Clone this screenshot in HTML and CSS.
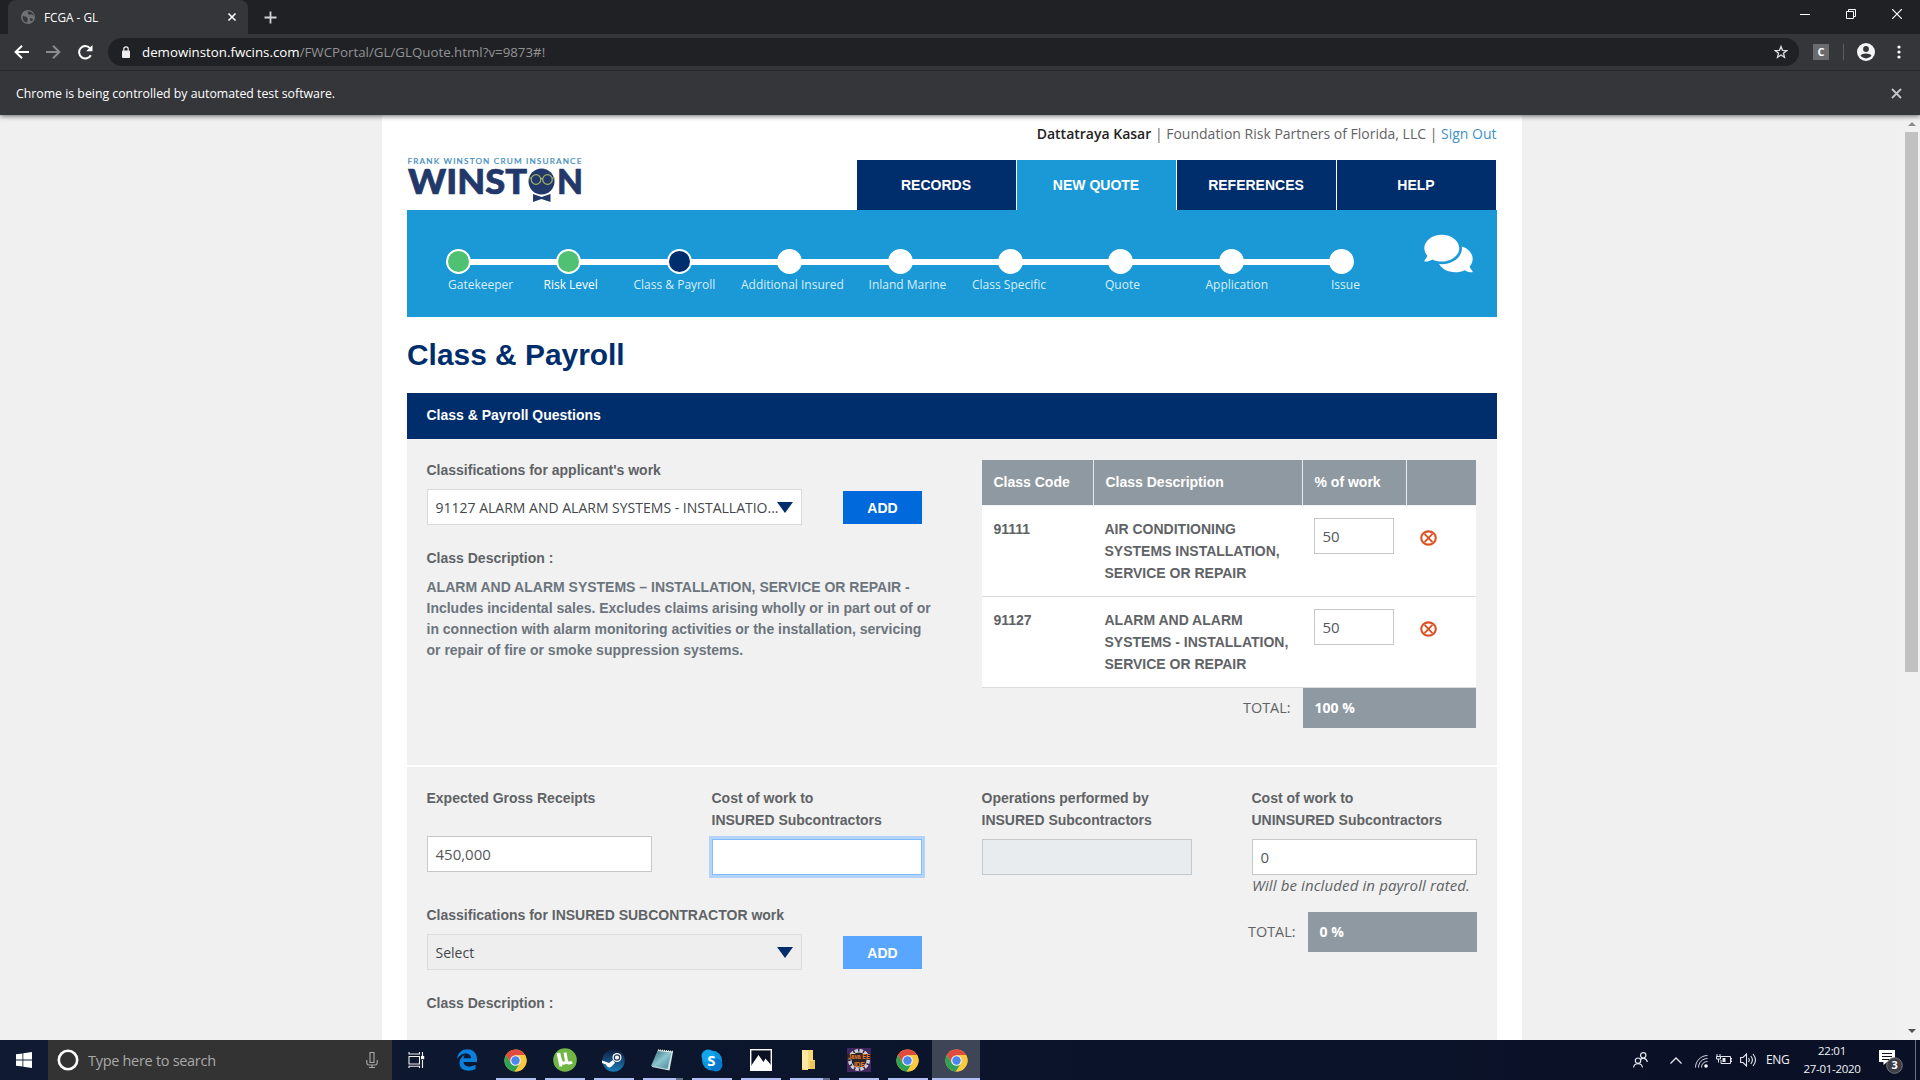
FILE: index.html
```html
<!DOCTYPE html>
<html lang="en">
<head>
<meta charset="utf-8">
<title>FCGA - GL</title>
<link rel="stylesheet" href="styles.css">
</head>
<body>
<svg class="defs" width="0" height="0" aria-hidden="true">
  <symbol id="chrome" viewBox="0 0 24 24">
    <circle cx="12" cy="12" r="11.5" fill="#fbc93d"/>
    <path d="M2 6.3A11.5 11.5 0 0 1 22 6.3L12 6.6 7.2 15z" fill="#e04a3f"/>
    <path d="M2 6.3A11.5 11.5 0 0 0 11.4 23.5L16.8 14.8 12 17 7.2 14.8z" fill="#2fa353"/>
    <path d="M22 6.3A11.5 11.5 0 0 1 11.4 23.5L16.8 14.8 17 10 12 6.4z" fill="#fbc93d"/>
    <circle cx="12" cy="12" r="5.6" fill="#f3f3f3"/>
    <circle cx="12" cy="12" r="4.4" fill="#4a86ee"/>
  </symbol>
  <symbol id="remove" viewBox="0 0 17 16">
    <ellipse cx="8.5" cy="8" rx="7.3" ry="6.6" fill="none" stroke="#db5325" stroke-width="2.1"/>
    <path d="M4.6 3.8L12.4 12.2M12.4 3.8L4.6 12.2" stroke="#db5325" stroke-width="1.9"/>
  </symbol>
</svg>

<header class="browser">
  <div class="tabstrip">
    <div class="tab">
      <svg class="globe" width="14" height="14" viewBox="0 0 14 14"><circle cx="7" cy="7" r="7" fill="#6f7175"/><path d="M2 5.500C3.500 7 5.500 6 6.500 8S5.500 11 6.500 12.500C3 12.500 1 9.500 2 5.500zM7 1.500C6 4 8 5 9.500 4.500S12 5 12.800 6.500C13 3.500 10 1 7 1.500zM9 8.500C11 8 12.500 9 11.500 10.500S8.500 10.500 9 8.500z" fill="#36373a"/></svg>
      <span class="tab-title">FCGA - GL</span>
      <svg width="10" height="10" viewBox="0 0 10 10"><path d="M1.500 1.500L8.500 8.500M8.500 1.500L1.500 8.500" stroke="#fff" stroke-width="1.600"/></svg>
    </div>
    <svg class="newtab" width="13" height="13" viewBox="0 0 13 13"><path d="M6.500 .5V12.500M.5 6.500H12.500" stroke="#d2d3d5" stroke-width="1.800"/></svg>
    <div class="winctl">
      <svg width="10" height="10" viewBox="0 0 10 10"><path d="M0 5.500H10" stroke="#fff"/></svg>
      <svg width="10" height="10" viewBox="0 0 10 10"><path d="M.5 2.500H7.500V9.500H.5zM2.500 2.500V.5H9.500V7.500H7.500" fill="none" stroke="#fff"/></svg>
      <svg width="10" height="10" viewBox="0 0 10 10"><path d="M0 0L10 10M10 0L0 10" stroke="#fff" stroke-width="1.200"/></svg>
    </div>
  </div>
  <div class="toolbar">
    <svg width="15" height="14" viewBox="0 0 15 14"><path d="M15 7H2M8 .8L1.600 7L8 13.200" fill="none" stroke="#fff" stroke-width="2"/></svg>
    <svg width="15" height="14" viewBox="0 0 15 14"><path d="M0 7H13M7 .8L13.400 7L7 13.200" fill="none" stroke="#8b8c8f" stroke-width="1.900"/></svg>
    <svg width="15" height="15" viewBox="0 0 15 15"><path d="M12.800 10.200A6.200 6.200 0 1 1 12 3.200" fill="none" stroke="#fff" stroke-width="2"/><path d="M14.500 0V6.300H8.200z" fill="#fff"/></svg>
    <div class="omnibox">
      <svg width="8" height="12" viewBox="0 0 8 12"><rect y="4.500" width="8" height="7.500" rx="1" fill="#eee"/><path d="M1.800 5V3a2.200 2.200 0 0 1 4.400 0V5" fill="none" stroke="#eee" stroke-width="1.200"/></svg>
      <span class="url"><b>demowinston.fwcins.com</b>/FWCPortal/GL/GLQuote.html?v=9873#!</span>
      <svg class="star" width="14" height="14" viewBox="0 0 14 14"><path d="M7 1.500L8.500 5.300 12.700 5.600 9.500 8.200 10.500 12.300 7 10 3.500 12.300 4.500 8.200 1.300 5.600 5.500 5.300z" fill="none" stroke="#dcdcde" stroke-width="1.300"/></svg>
    </div>
    <span class="ext">C</span>
    <span class="sep"></span>
    <svg class="avatar" width="18" height="18" viewBox="0 0 18 18"><circle cx="9" cy="9" r="9" fill="#f5f5f6"/><circle cx="9" cy="6" r="2.900" fill="#35363a"/><path d="M3.500 12.600C5 9.700 13 9.700 14.500 12.600 12 16.300 6 16.300 3.500 12.600z" fill="#35363a"/></svg>
    <svg width="4" height="14" viewBox="0 0 4 14"><g fill="#fff"><circle cx="2" cy="2" r="1.600"/><circle cx="2" cy="7" r="1.600"/><circle cx="2" cy="12" r="1.600"/></g></svg>
  </div>
  <div class="infobar">
    <span>Chrome is being controlled by automated test software.</span>
    <svg width="11" height="11" viewBox="0 0 11 11"><path d="M1 1L10 10M10 1L1 10" stroke="#c4c5c7" stroke-width="1.800"/></svg>
  </div>
</header>

<div class="viewport">
  <main class="page">
    <div class="userline"><b>Dattatraya Kasar</b> | Foundation Risk Partners of Florida, LLC | <a>Sign Out</a></div>
    <div class="masthead">
      <svg class="logo" width="176" height="50" viewBox="0 0 176 50">
        <text class="logo-top" x="0.500" y="10.700" textLength="174" lengthAdjust="spacing">FRANK WINSTON CRUM INSURANCE</text>
        <text class="logo-main" x="1" y="41" textLength="119" lengthAdjust="spacingAndGlyphs">WINST</text>
        <text class="logo-main" x="150" y="41" textLength="26" lengthAdjust="spacingAndGlyphs">N</text>
        <circle cx="134.500" cy="28.500" r="13" fill="#22386a"/>
        <g fill="none" stroke="#9fb565" stroke-width="1.200"><circle cx="129" cy="26.500" r="4.800"/><circle cx="140.500" cy="26.500" r="4.800"/><path d="M133.800 26Q134.800 25 135.800 26M121.500 25H124.200M145.300 25H148"/></g>
        <path d="M126 41L134.500 44 143.500 41V49L134.500 46 126 49z" fill="#22386a"/>
      </svg>
      <nav class="mainnav"><a>RECORDS</a><a class="on">NEW QUOTE</a><a>REFERENCES</a><a>HELP</a></nav>
    </div>
    <section class="wizard">
      <div class="track">
        <i class="done"></i><i class="done"></i><i class="current"></i><i></i><i></i><i></i><i></i><i></i><i></i>
      </div>
      <svg class="chat" width="49" height="43" viewBox="0 0 576 512"><path fill="#fff" d="M416 192c0-88.400-93.100-160-208-160S0 103.600 0 192c0 34.300 14.100 65.900 38 92-13.400 30.200-35.500 54.200-35.800 54.500-2.200 2.300-2.800 5.700-1.500 8.700S4.800 352 8 352c36.600 0 66.900-12.300 88.700-25 32.200 15.700 70.300 25 111.300 25 114.900 0 208-71.600 208-160zm122 220c23.900-26 38-57.700 38-92 0-66.900-53.500-124.200-129.300-148.100.9 6.600 1.300 13.300 1.300 20.100 0 105.900-107.700 192-240 192-10.800 0-21.300-.8-31.700-1.900C207.800 439.600 281.800 480 368 480c41 0 79.100-9.200 111.300-25 21.800 12.700 52.100 25 88.700 25 3.200 0 6.100-1.900 7.300-4.800 1.300-2.900.7-6.300-1.500-8.700-.3-.3-22.400-24.200-35.800-54.500z"/></svg>
      <div class="steps">
        <span>Gatekeeper</span><span class="hot">Risk Level</span><span>Class &amp; Payroll</span><span>Additional Insured</span><span>Inland Marine</span><span>Class Specific</span><span>Quote</span><span>Application</span><span>Issue</span>
      </div>
    </section>
    <h1>Class &amp; Payroll</h1>
    <h2>Class &amp; Payroll Questions</h2>
    <section class="panel applicant">
      <div class="classify">
        <label>Classifications for applicant's work</label>
        <div class="pick">
          <div class="select"><span>91127 ALARM AND ALARM SYSTEMS - INSTALLATIO...</span></div>
          <button>ADD</button>
        </div>
        <label>Class Description :</label>
        <p>ALARM AND ALARM SYSTEMS – INSTALLATION, SERVICE OR REPAIR -<br>Includes incidental sales. Excludes claims arising wholly or in part out of or<br>in connection with alarm monitoring activities or the installation, servicing<br>or repair of fire or smoke suppression systems.</p>
      </div>
      <div class="codes">
        <div class="row head"><span>Class Code</span><span>Class Description</span><span>% of work</span><span></span></div>
        <div class="row"><span>91111</span><span>AIR CONDITIONING<br>SYSTEMS INSTALLATION,<br>SERVICE OR REPAIR</span><span class="cell-input"><span class="input">50</span></span><svg width="17" height="16"><use href="#remove"/></svg></div>
        <div class="row"><span>91127</span><span>ALARM AND ALARM<br>SYSTEMS - INSTALLATION,<br>SERVICE OR REPAIR</span><span class="cell-input"><span class="input">50</span></span><svg width="17" height="16"><use href="#remove"/></svg></div>
        <div class="total"><span>TOTAL:</span><b>100 %</b></div>
      </div>
    </section>
    <section class="panel costs">
      <div class="fields">
        <div class="field receipts"><label>Expected Gross Receipts</label><div class="input">450,000</div></div>
        <div class="field"><label>Cost of work to<br>INSURED Subcontractors</label><div class="input focus"></div></div>
        <div class="field"><label>Operations performed by<br>INSURED Subcontractors</label><div class="input off"></div></div>
        <div class="field"><label>Cost of work to<br>UNINSURED Subcontractors</label><div class="input">0</div><em>Will be included in payroll rated.</em></div>
      </div>
      <div class="subs">
        <div class="classify">
          <label>Classifications for INSURED SUBCONTRACTOR work</label>
          <div class="pick">
            <div class="select off"><span>Select</span></div>
            <button class="off">ADD</button>
          </div>
          <label>Class Description :</label>
        </div>
        <div class="total"><span>TOTAL:</span><b>0 %</b></div>
      </div>
    </section>
  </main>
  <div class="scrollbar">
    <i class="up"></i><i class="thumb"></i><i class="down"></i>
  </div>
</div>

<footer class="taskbar">
  <div class="start"><svg width="16" height="16" viewBox="0 0 16 16"><path d="M0 2.300L6.500 1.400V7.600H0zM7.300 1.300L16 0V7.600H7.300zM0 8.400H6.500V14.600L0 13.700zM7.300 8.400H16V16L7.300 14.700z" fill="#fff"/></svg></div>
  <div class="search">
    <svg width="22" height="22" viewBox="0 0 22 22"><circle cx="11" cy="11" r="9.200" fill="none" stroke="#fff" stroke-width="2.600"/></svg>
    <span>Type here to search</span>
    <svg width="12" height="16" viewBox="0 0 12 16"><path d="M4 .5H8V10.500H4zM.8 8V10.500Q.8 13 3 13H9Q11.200 13 11.200 10.500V8M6 13V15.500M3 15.500H9" fill="none" stroke="#aaa" stroke-width="1.100"/></svg>
  </div>
  <div class="apps">
    <div class="app view"><svg width="17" height="16" viewBox="0 0 17 16"><path d="M1 4.500H11.500V12H1zM1 0V2H11.500V0M1 16V14.300H11.500V16M14.500 0V4M14.500 8V16" fill="none" stroke="#eee" stroke-width="1.100"/><rect x="13" y="4" width="3.200" height="3.200" fill="#fff"/></svg></div>
    <div class="app"><svg width="22" height="22" viewBox="0 0 22 22"><path d="M1 10C2-3 21-3 21 10V13H7.500C8 18.500 15 18.500 19.500 15.800V20C14 23 3.500 22.500 3.500 14 3.500 10 6 7 9 6 7.800 7.200 7.500 8.500 7.500 9.300H15C15 4 8.500 3.500 5 6 3 7.300 1.800 8.500 1 10z" fill="#0a7fdc"/></svg></div>
    <div class="app open"><svg width="23" height="23"><use href="#chrome"/></svg></div>
    <div class="app open"><svg width="24" height="24" viewBox="0 0 24 24"><circle cx="12" cy="12" r="11.800" fill="#71b544"/><path d="M5 5L8 18.500M5.700 5L7.500 12C8.500 16.500 13.500 16 13.300 12L12 4.500M13.300 12C14 16 16.500 15.500 19 14" fill="none" stroke="#fff" stroke-width="3"/></svg></div>
    <div class="app open"><svg width="23" height="23" viewBox="0 0 23 23"><defs><linearGradient id="st" x1="0" y1="0" x2="0" y2="1"><stop offset="0" stop-color="#101c3c"/><stop offset="1" stop-color="#1a7dba"/></linearGradient></defs><circle cx="11.500" cy="11.500" r="11.200" fill="url(#st)"/><path d="M0 11.500L7 14 11 11 13 14 9 18C7 19 5 18 4 15.500L0 14z" fill="#fff"/><circle cx="15" cy="8.500" r="4.500" fill="#fff"/><circle cx="15" cy="8.500" r="2.700" fill="none" stroke="#203a61" stroke-width="1.200"/></svg></div>
    <div class="app open multi"><svg width="23" height="22" viewBox="0 0 23 22"><defs><linearGradient id="np" x1="0" y1="0" x2="1" y2="1"><stop offset="0" stop-color="#2e6470"/><stop offset=".5" stop-color="#8cc6cf"/><stop offset="1" stop-color="#448591"/></linearGradient></defs><path d="M7 1L22 2.500 18.500 21.500 1 18z" fill="#d7e4e4"/><path d="M6.500 2L20.500 3.500 16.500 20 0 17z" fill="url(#np)"/><path d="M7 1L22 2.500" stroke="#f3f3f3" stroke-width="1.500" stroke-dasharray="1 1"/></svg></div>
    <div class="app open"><svg width="22" height="23" viewBox="0 0 22 23"><circle cx="11" cy="11.500" r="10" fill="#0b95de"/><circle cx="7" cy="7" r="6.500" fill="#13a4e9"/><circle cx="15" cy="16" r="6.500" fill="#0879cc"/><text class="skype" x="6.300" y="17">S</text></svg></div>
    <div class="app open"><svg width="22" height="22" viewBox="0 0 22 22"><rect x=".7" y=".7" width="20.600" height="20.600" fill="#0b1124" stroke="#fff" stroke-width="1.400"/><path d="M1 17L8.500 6 13.500 13 15.500 9.500 21 16V21H1z" fill="#fff"/></svg></div>
    <div class="app folder open multi"><svg width="16" height="20" viewBox="0 0 16 20"><path d="M2 0H13V10H15V19H8V20H2z" fill="#f6d877"/><path d="M2 0L8 1V20L2 18z" fill="#fde9a3"/><path d="M10 11H15V19H10z" fill="#eec35a"/></svg></div>
    <div class="app open"><svg width="24" height="24" viewBox="0 0 24 24"><rect width="24" height="24" fill="#40275f"/><circle cx="12" cy="12" r="9.500" fill="#28222c" stroke="#cfcfd4" stroke-width="3" stroke-dasharray="3.500 1.500"/><circle cx="12" cy="12" r="8" fill="#28222c" stroke="#c9c9cf"/><path d="M0 6H24V11.500H0z" fill="#2b2026"/><text class="java" x="1" y="11" textLength="22" lengthAdjust="spacingAndGlyphs">Java EE</text><text class="java" x="7" y="18.500" textLength="11" lengthAdjust="spacingAndGlyphs">IDE</text></svg></div>
    <div class="app open"><svg width="23" height="23"><use href="#chrome"/></svg></div>
    <div class="app open active"><svg width="23" height="23"><use href="#chrome"/></svg></div>
  </div>
  <div class="tray">
    <svg width="15" height="16" viewBox="0 0 15 16"><g fill="none" stroke="#e6e8ee" stroke-width="1.200"><circle cx="10.200" cy="3.300" r="2.700"/><path d="M7.500 8C8.500 5.500 13.500 5.500 14.300 10"/><circle cx="5" cy="8.700" r="2.700"/><path d="M.6 15.500C1 10.500 9 10.500 9.400 15.500"/></g></svg>
    <svg class="chev" width="12" height="7" viewBox="0 0 12 7"><path d="M.5 6.500L6 1 11.500 6.500" fill="none" stroke="#e6e8ee" stroke-width="1.300"/></svg>
    <svg class="wifi" width="13" height="13" viewBox="0 0 13 13"><g fill="none" stroke="#d5d9e2"><path d="M.5 12.500C.5 6 6 .5 12.500 .5M3.500 12.500C3.500 7.500 7.500 3.500 12.500 3.500M6.500 12.500C6.500 9 9 6.500 12.500 6.500"/></g><circle cx="11" cy="11" r="1.800" fill="#fff"/></svg>
    <svg class="batt" width="16" height="12" viewBox="0 0 16 12"><path d="M4.500 2.500H14.500V9.500H5V6M14.500 4.500H16V7.500H14.500M1 0V2.500M4 0V2.500M.5 2.500H4.500V5H.5zM2.500 5V8.500" fill="none" stroke="#e6e8ee"/><rect x="6.500" y="4" width="3" height="4" fill="#e6e8ee"/></svg>
    <svg class="vol" width="17" height="14" viewBox="0 0 17 14"><path d="M.6 4.500H3L6.500 1V13L3 9.500H.6zM8.500 5Q10 7 8.500 9M10.800 3Q14 7 10.800 11M13 1Q18 7 13 13" fill="none" stroke="#e6e8ee" stroke-width="1.100"/></svg>
    <span class="lang">ENG</span>
    <span class="clock">22:01<br>27-01-2020</span>
    <svg class="note" width="25" height="24" viewBox="0 0 25 24"><path d="M0 0H16V12H8L4.500 15V12H0z" fill="#fff"/><path d="M3 3.500H13M3 6.500H13M3 9.500H10" stroke="#0b1124" stroke-width="1.200"/><circle cx="15.500" cy="15.500" r="7.800" fill="#3c3e44" stroke="#75777e"/><text class="count" x="12.400" y="19.300">3</text></svg>
    <i class="peek"></i>
  </div>
</footer>
</body>
</html>
```
FILE: styles.css
```css
* { box-sizing: border-box; }

body {
  margin: 0;
  width: 1920px;
  height: 1080px;
  overflow: hidden;
  display: flex;
  flex-direction: column;
  background: #f0f0f0;
  font: 14px/22px "Open Sans", "Noto Sans", sans-serif;
  color: #5f6366;
}

svg { display: block; flex: none; }
.defs { position: absolute; }

/* Browser frame */
.browser {
  flex: none;
  height: 115px;
  background: #35363a;
  color: #fff;
  font-size: 12px;
  box-shadow: 0 1px 5px rgba(0, 0, 0, .6);
  position: relative;
  z-index: 1;
}

.tabstrip {
  height: 34px;
  padding-left: 8px;
  background: #202124;
  display: flex;
  align-items: center;
}

.tab {
  width: 240px;
  height: 34px;
  padding: 0 11px 0 13px;
  border-radius: 8px 8px 0 0;
  background: #35363a;
  display: flex;
  align-items: center;
}

.tab-title {
  flex: 1;
  margin-left: 9px;
  font-size: 11.800px;
}

.newtab { margin-left: 16px; }

.winctl {
  margin-left: auto;
  padding-right: 18px;
  margin-top: -6px;
  display: flex;
  gap: 36px;
}

.toolbar {
  height: 37px;
  padding: 0 19px 0 14px;
  border-bottom: 1px solid #26272a;
  display: flex;
  align-items: center;
  gap: 17px;
}

.omnibox {
  flex: 1;
  height: 28px;
  margin-left: -2px;
  padding: 0 11px 0 14px;
  border-radius: 14px;
  background: #202124;
  display: flex;
  align-items: center;
}

.url {
  flex: 1;
  margin-left: 12px;
  color: #919396;
  font-size: 13.300px;
}

.url b { color: #fff; font-weight: 400; }

.ext {
  width: 16px;
  height: 16px;
  margin: 0 1px 0 -3px;
  background: #6b6b6d;
  text-align: center;
  font: 700 11px/16px "Open Sans", sans-serif;
}

.sep {
  width: 1px;
  height: 16px;
  margin: 0 -4px;
  background: #5c5d60;
}

.avatar { margin-right: 5px; }

.infobar {
  height: 44px;
  padding: 1px 18px 0 16px;
  display: flex;
  align-items: center;
  justify-content: space-between;
  font-size: 12.300px;
}

/* Page */
.viewport {
  flex: none;
  height: 925px;
  padding-left: 382px;
  overflow: hidden;
  display: flex;
  justify-content: space-between;
}

.page {
  width: 1140px;
  padding: 8px 25px 0;
  background: #fff;
}

.userline { text-align: right; padding-right: .5px; }
.userline b { font-weight: 600; color: #222; }
.userline a { color: #3f91c8; }

.masthead {
  height: 65px;
  display: flex;
  justify-content: space-between;
  align-items: flex-end;
  padding-right: 1px;
}

.logo { margin-bottom: 7px; }
.logo-top { font: 8.200px Lato, sans-serif; fill: #3c8cbe; stroke: #3c8cbe; stroke-width: .2px; }
.logo-main { font: 900 34px Lato, sans-serif; fill: #22386a; stroke: #22386a; stroke-width: .7px; }

.mainnav { display: flex; gap: 1px; }

.mainnav a {
  width: 159px;
  height: 50px;
  padding-right: 1px;
  background: #002d6c;
  color: #fff;
  text-align: center;
  font: 700 14px/50px "Liberation Sans", Arial, sans-serif;
}

.mainnav .on { background: #1a99d6; }

.wizard {
  height: 107px;
  padding: 39px 24px 0 39px;
  background: #1a99d6;
  color: #d8eefa;
  font-size: 12px;
  line-height: 18px;
  display: grid;
  grid-template-columns: 908px 49px;
  grid-template-rows: 25px auto;
  justify-content: space-between;
}

.track {
  display: flex;
  justify-content: space-between;
  align-items: center;
  background: linear-gradient(#fff, #fff) 8px 10px / 890px 6px no-repeat;
}

.track i {
  width: 25px;
  height: 25px;
  border: 2px solid #fff;
  border-radius: 50%;
  background: #fff;
}

.track .done { background: #50c173; }
.track .current { background: #002d6c; }
.chat { margin-top: -17px; }

.steps {
  grid-column: 1;
  margin: 2px 0 0 2px;
  display: grid;
  grid-template-columns: 95.500px 90px 107.500px 127.600px 103.400px 133px 100.500px 125.500px auto;
  white-space: nowrap;
}

.steps .hot { color: #fff; }

h1, h2, label, p, .row {
  font-family: "Liberation Sans", Arial, sans-serif;
  font-weight: 700;
}

h1 {
  margin: 0;
  height: 76px;
  color: #002d6c;
  font-size: 29.900px;
  line-height: 75px;
}

h2 {
  margin: 0;
  height: 46px;
  padding-left: 19.500px;
  background: #002d6c;
  color: #fff;
  font-size: 14px;
  line-height: 45px;
}

.panel { background: #f1f1f1; }

.applicant {
  height: 328px;
  padding: 20px 21px 0 20px;
  border-bottom: 2px solid #fff;
  display: flex;
  justify-content: space-between;
}

label, p { position: relative; left: -.5px; }
label { display: block; }
.pick { display: flex; align-items: center; gap: 41px; margin: 8px 0 22px; }

.select, .input {
  height: 36px;
  padding-left: 7.500px;
  border: 1px solid #c6c9cb;
  background: #fff;
  color: #54585c;
  font-size: 15px;
  line-height: 34px;
  white-space: nowrap;
}

.select {
  width: 375px;
  padding-right: 8px;
  border-color: #d8dadc;
  font-size: 14px;
  display: flex;
  align-items: center;
  justify-content: space-between;
}

.select span { padding-top: 1px; color: #44474a; }

.select::after {
  content: "";
  border: solid transparent;
  border-width: 11px 8px 0;
  border-top-color: #002d6c;
  margin-left: -4px;
}

.select.off { background: #eee; border-color: #ddd; }

button {
  width: 79px;
  height: 33px;
  padding: 0;
  border: 0;
  background: #0069dc;
  color: #fff;
  font: 700 14px/34px "Liberation Sans", Arial, sans-serif;
}

button.off { background: #58a6ff; }

p { margin: 8px 0 0; line-height: 21px; color: #6c757d; white-space: nowrap; }

.codes { width: 494px; margin-top: 1px; }

.row {
  height: 91px;
  padding-top: 12px;
  border-bottom: 1px solid #dadcde;
  background: #fff;
  display: grid;
  grid-template-columns: 111px 209px 104px 70px;
}

.row > span { padding-left: 11.500px; }
.row > svg { margin: 12px 0 0 14px; }
.row .cell-input { padding: 0 0 0 12px; }

.row .input {
  display: block;
  width: 80px;
  font: 400 15px/34px "Open Sans", sans-serif;
}

.row.head {
  height: 45px;
  margin-bottom: 1px;
  padding: 0;
  border: 0;
  background: #8f99a1;
  color: #fff;
  line-height: 45px;
}

.row.head span + span { border-left: 1px solid #e6e8ea; }

.total {
  display: grid;
  grid-template-columns: 309px 173px;
  column-gap: 12px;
  line-height: 40px;
}

.total span { position: relative; left: -.5px; text-align: right; font-size: 14.400px; }
.total b { height: 40px; padding-left: 11.500px; background: #8f99a1; color: #fff; }

.costs { height: 290px; padding: 20px 20px 0; }

.fields {
  height: 117px;
  display: grid;
  grid-template-columns: 285px 270px 270px 225px;
}

.fields .input { width: 210px; margin-top: 8px; }
.fields .field:last-child .input { width: 225px; }
.fields .receipts .input { width: 225px; margin-top: 27px; }
.input.focus { border-color: #80bdff; box-shadow: 0 0 0 3px #b3d4f8; }
.input.off { background: #e9ecef; }
em { display: block; font-size: 15px; line-height: 20px; letter-spacing: .12px; white-space: nowrap; }

.subs { display: flex; justify-content: space-between; }

.subs .total {
  grid-template-columns: 48px 169px;
  margin-top: 8px;
  height: 40px;
}

.scrollbar {
  width: 17px;
  background: #f1f1f1;
  display: flex;
  flex-direction: column;
  align-items: center;
}

.scrollbar .up { margin-top: 7px; border: solid transparent; border-width: 0 4px 4px; border-bottom-color: #8b8b8b; }
.scrollbar .thumb { margin-top: 6px; width: 13px; height: 540px; background: #c1c1c1; }
.scrollbar .down { margin: auto 0 7px; border: solid transparent; border-width: 4px 4px 0; border-top-color: #505050; }

/* Taskbar */
.taskbar {
  height: 40px;
  background: linear-gradient(90deg, #101b33, #0b152c 40%, #0a1026);
  display: flex;
  align-items: center;
  color: #f0f2f6;
}

.start { width: 48px; display: flex; justify-content: center; }

.search {
  width: 344px;
  height: 40px;
  padding: 0 14px 0 9px;
  background: #333;
  color: #a9a9a9;
  display: flex;
  align-items: center;
}

.search span { flex: 1; margin-left: 9px; padding-top: 1px; font-size: 14.500px; letter-spacing: -.3px; }

.apps { display: flex; }

.app {
  width: 49px;
  height: 40px;
  display: flex;
  align-items: center;
  justify-content: center;
}

.view { width: 50px; padding-right: 2px; }
.folder { padding-right: 3px; }
.open { background: linear-gradient(#b3c0f5, #b3c0f5) 50% 100% / 40px 2px no-repeat; }
.multi { background: linear-gradient(90deg, #b3c0f5 33px, #65708f 33px) 50% 100% / 40px 2px no-repeat; }
.active { width: 48px; background: linear-gradient(#b3c0f5, #b3c0f5) 50% 100% / 48px 2px no-repeat #3e4556; }

.skype { font: 700 15px "Open Sans", sans-serif; fill: #fff; }
.java { font: 700 7px "Liberation Sans", sans-serif; fill: #ee8026; }

.tray { margin-left: auto; height: 40px; display: flex; align-items: center; }
.chev { margin-left: 22px; }
.wifi { margin: 2px 0 0 13px; }
.batt { margin-left: 8px; }
.vol { margin-left: 8px; }
.lang { margin-left: 9px; width: 24px; font-size: 12px; letter-spacing: -.3px; }

.clock {
  width: 60px;
  margin-left: 12px;
  text-align: center;
  font-size: 11.500px;
  line-height: 18px;
  letter-spacing: -.3px;
}

.note { margin: 4px 0 0 17px; }
.count { font: 700 11px "Open Sans", sans-serif; fill: #fff; }
.peek { width: 1px; height: 40px; margin: 0 4px 0 11px; background: #6b7080; }
```
